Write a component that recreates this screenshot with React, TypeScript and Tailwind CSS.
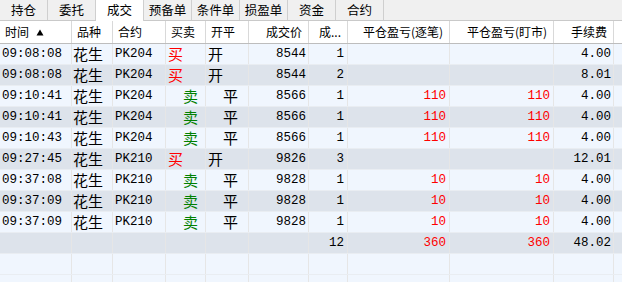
import React from "react";

type Row = {
  time: string;
  kind: string;
  code: string;
  side: "买" | "卖" | "";
  oc: "开" | "平" | "";
  price: string;
  qty: string;
  pnl: string;
  pnlMkt: string;
  fee: string;
};

const tabs = ["持仓", "委托", "成交", "预备单", "条件单", "损盈单", "资金", "合约"];

const cols =
  "grid grid-cols-[72px_41px_53px_40px_43px_60px_39px_102px_104px_60px_8px]";

const mk = (
  time: string,
  code: string,
  side: "买" | "卖",
  price: string,
  qty: string,
  pnl: string,
  fee: string
): Row => ({
  time,
  kind: "花生",
  code,
  side,
  oc: side === "买" ? "开" : "平",
  price,
  qty,
  pnl,
  pnlMkt: pnl,
  fee,
});

const trades: Row[] = [
  mk("09:08:08", "PK204", "买", "8544", "1", "", "4.00"),
  mk("09:08:08", "PK204", "买", "8544", "2", "", "8.01"),
  mk("09:10:41", "PK204", "卖", "8566", "1", "110", "4.00"),
  mk("09:10:41", "PK204", "卖", "8566", "1", "110", "4.00"),
  mk("09:10:43", "PK204", "卖", "8566", "1", "110", "4.00"),
  mk("09:27:45", "PK210", "买", "9826", "3", "", "12.01"),
  mk("09:37:08", "PK210", "卖", "9828", "1", "10", "4.00"),
  mk("09:37:09", "PK210", "卖", "9828", "1", "10", "4.00"),
  mk("09:37:09", "PK210", "卖", "9828", "1", "10", "4.00"),
];

const mono = "font-['Liberation_Mono','Noto_Sans_CJK_SC',monospace] text-[12.5px]";
const cjk = "font-['Noto_Sans_CJK_SC',sans-serif] text-[15px]";
const cell = "border-r border-[#e6e6e6] overflow-hidden whitespace-nowrap flex items-center";

function DataRow({ r, dark }: { r?: Row; dark: boolean }) {
  return (
    <div
      className={`${cols} h-[21px] border-b border-[#e9edf2] ${
        dark ? "bg-[#dde3eb]" : "bg-[#f0f6fe]"
      }`}
    >
      <div className={`${cell} ${mono} pl-[2px]`}>{r?.time}</div>
      <div className={`${cell} ${cjk} pl-[1px]`}>{r?.kind}</div>
      <div className={`${cell} ${mono} pl-[2px]`}>{r?.code}</div>
      <div
        className={`${cell} ${cjk} ${
          r?.side === "买" ? "pl-[2px] text-[#ff0000]" : "pl-[17px] text-[#008000]"
        }`}
      >
        {r?.side}
      </div>
      <div className={`${cell} ${cjk} ${r?.oc === "平" ? "pl-[17px]" : "pl-[2px]"}`}>
        {r?.oc}
      </div>
      <div className={`${cell} ${mono} justify-end pr-[2px]`}>{r?.price}</div>
      <div className={`${cell} ${mono} justify-end pr-[3px]`}>{r?.qty}</div>
      <div className={`${cell} ${mono} justify-end pr-[3px] text-[#ff0000]`}>{r?.pnl}</div>
      <div className={`${cell} ${mono} justify-end pr-[3px] text-[#ff0000]`}>{r?.pnlMkt}</div>
      <div className={`${cell} ${mono} justify-end pr-[2px]`}>{r?.fee}</div>
      <div className={`${cell} border-r-0`} />
    </div>
  );
}

export default function App() {
  const headers: { label: React.ReactNode; right?: boolean }[] = [
    {
      label: (
        <span className="flex items-center gap-[7px]">
          时间
          <svg width="8" height="7" viewBox="0 0 8 7">
            <path d="M4 0.5 L7.5 6.5 L0.5 6.5 Z" fill="#000" />
          </svg>
        </span>
      ),
    },
    { label: "品种" },
    { label: "合约" },
    { label: "买卖" },
    { label: "开平" },
    { label: "成交价", right: true },
    { label: "成...", right: true },
    { label: "平仓盈亏(逐笔)", right: true },
    { label: "平仓盈亏(盯市)", right: true },
    { label: "手续费", right: true },
    { label: "" },
  ];

  return (
    <div className="w-[622px] h-[282px] overflow-hidden bg-[#f0f6fe] text-black font-['Noto_Sans_CJK_SC',sans-serif]">
      {/* tabs */}
      <div className="flex h-[21px] bg-[#f0f0f0] border-b border-[#c9c9c9] text-[12.5px]">
        {tabs.map((t, i) => (
          <div
            key={t}
            className={`w-[48px] flex items-center justify-center border-r border-[#cfcfcf] ${
              i === 2 ? "bg-white h-[21px]" : ""
            }`}
          >
            {t}
          </div>
        ))}
      </div>

      {/* header */}
      <div className={`${cols} h-[23px] bg-white border-b border-[#bdbdbd] text-[12px]`}>
        {headers.map((h, i) => (
          <div
            key={i}
            className={`flex items-center border-r border-[#d9d9d9] whitespace-nowrap overflow-hidden ${
              h.right ? "justify-end pr-[6px]" : "pl-[5px]"
            } ${i === 10 ? "border-r-0" : ""}`}
          >
            {h.label}
          </div>
        ))}
      </div>

      {trades.map((r, i) => (
        <DataRow key={i} r={r} dark={i % 2 === 1} />
      ))}
      <DataRow
        dark
        r={{
          time: "",
          kind: "",
          code: "",
          side: "",
          oc: "",
          price: "",
          qty: "12",
          pnl: "360",
          pnlMkt: "360",
          fee: "48.02",
        }}
      />
      <DataRow dark={false} />
      <DataRow dark={false} />
    </div>
  );
}
